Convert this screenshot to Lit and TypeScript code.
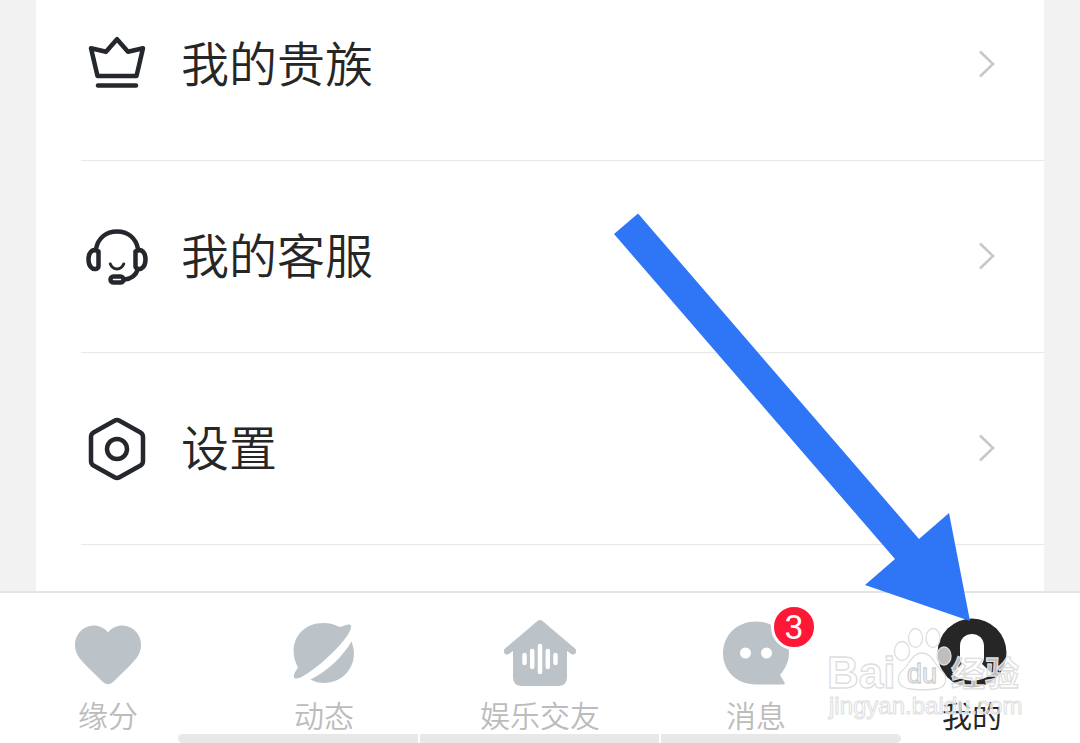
import { LitElement, html, css, svg } from "lit";
import { customElement } from "lit/decorators.js";

const crown = svg`<path d="M91 48.2 97.500 76H136.500L143 48.2 128 51.8 117 39.2 106 51.8Z"/><path d="M98 85.500H136"/>`;
const headset = svg`<path d="M96 249C98 238 106 231.500 117 231.500S136 238 138 249"/><path d="M98.500 251.500C92 247.500 88.500 253 88.500 259.500S92 270 96.500 268.800C97.800 268.300 98.500 267.500 98.500 266Z"/><path d="M135.500 251.500C142 247.500 145.500 253 145.500 259.500S142 270 137.500 268.800C136.200 268.300 135.500 267.500 135.500 266Z"/><path d="M138 269C136 275 131 279 124 279.500"/><rect x="110.500" y="276.500" width="13" height="6" rx="3"/><path stroke-width="3" d="M110.300 264C113 270.500 121 270.500 123.700 264"/>`;
const hexagon = svg`<path d="M114.500 420.700Q117 419.300 119.500 420.700L140.500 432.500Q143 434 143 437V461Q143 464 140.500 465.500L119.500 477.300Q117 478.700 114.500 477.300L93.500 465.500Q91 464 91 461V437Q91 434 93.500 432.500Z"/><circle cx="117" cy="449" r="10"/>`;

const rows = [
  { label: "我的贵族", icon: crown, box: "81 28 72 72" },
  { label: "我的客服", icon: headset, box: "81 220 72 72" },
  { label: "设置", icon: hexagon, box: "81 412 72 72" },
];

const tabs = [
  {
    label: "缘分",
    icon: svg`<path d="M36 15.500C30 7.500 20 7 13.500 10.500C6 14.500 3 21 3 28C3 37 8 42 14 48.500L31.500 65.500Q36 69 40.500 65.500L58 48.500C64 42 69 37 69 28C69 21 66 14.500 58.500 10.500C52 7 42 7.500 36 15.500Z"/>`,
  },
  {
    label: "动态",
    icon: svg`<path d="M10 50.500C-1 31 9 6 36 6Q44 6 51.500 10C57 9 60 6.500 62.500 8C65 10 60 19 51 29C40 41 28 51 17 58Q9 63 6.500 61C4.500 59 7 55 10 50.500Z"/><path d="M63.500 24.500C72 46 57 66 36 66Q29 66 22.500 62.500C40 54 55 39 63.500 24.500Z"/>`,
  },
  {
    label: "娱乐交友",
    icon: svg`<path d="M33.500 4Q36 2 38.500 4L71 31.500C74.500 35 69.500 39.500 66.500 36.500L63 34V60Q63 69 54 69H18Q9 69 9 60V34L5.500 36.500C2.500 39.500-2.500 35 1 31.500Z"/><path stroke="#fff" stroke-width="4.500" stroke-linecap="round" d="M20.500 38V46M28.200 34V50M36 29V55M43.800 34V50M51.500 38V46"/>`,
  },
  {
    label: "消息",
    badge: 3,
    icon: svg`<path d="M36 67.500C16 67.500 3 53 3 36.500C3 18 17 4.500 36 4.500S69 18 69 36C69 45 65 52 60 58L64.500 65.500Q65.500 67.500 63.500 67.500Z"/><circle cx="25.500" cy="36" r="5.500" fill="#fff"/><circle cx="46.500" cy="36" r="5.500" fill="#fff"/>`,
  },
  {
    label: "我的",
    current: true,
    icon: svg`<circle cx="36" cy="36" r="34.500"/><path fill="#fff" d="M24 29C24 13 48 13 48 29V41Q48 44 46 47C49 50 53 53 56 57C44 66 28 66 16 57C19 53 23 50 26 47Q24 44 24 41Z"/>`,
  },
];

@customElement("app-root")
export class AppRoot extends LitElement {
  static styles = css`
    :host {
      display: block;
      font-family: "Noto Sans CJK SC", "Liberation Sans", sans-serif;
      font-weight: 350;
      color: #262626;
    }
    .screen {
      position: relative;
      display: flex;
      flex-direction: column;
      height: 100vh;
      overflow: hidden;
      background: #f2f2f2;
    }
    .content {
      flex: 1;
      min-height: 0;
      overflow: hidden;
      margin: 0 36px;
      background: #fff;
    }
    .list {
      list-style: none;
      margin: -31px 0 0;
      padding: 0 0 0 45px;
    }
    .row {
      box-sizing: border-box;
      height: 192px;
      border-bottom: 1px solid #e8e8e8;
    }
    .link {
      box-sizing: border-box;
      display: flex;
      align-items: center;
      gap: 28px;
      height: 100%;
      padding: 0 48px 2px 0;
      color: inherit;
      text-decoration: none;
      font-size: 48px;
      line-height: 72px;
    }
    .row-icon {
      width: 72px;
      height: 72px;
      fill: none;
      stroke: #24272c;
      stroke-width: 4.5;
      stroke-linecap: round;
      stroke-linejoin: round;
    }
    .name {
      flex: 1;
      padding-bottom: 6px;
    }
    .chevron {
      width: 18px;
      height: 28px;
      fill: none;
      stroke: #c8c8c8;
      stroke-width: 2.6;
    }
    .tabs {
      display: grid;
      grid-template-columns: repeat(5, 1fr);
      height: 150px;
      border-top: 2px solid #e4e4e4;
      background: #fff;
    }
    .tab {
      display: flex;
      flex-direction: column;
      align-items: center;
      gap: 4px;
      padding: 24px 0 0;
      border: 0;
      background: none;
      color: #bcbcbc;
      font: inherit;
      font-size: 30px;
      line-height: 42px;
    }
    .tab.current {
      color: #262626;
      font-weight: 400;
    }
    .figure {
      position: relative;
      display: block;
      height: 72px;
    }
    .tab-icon {
      width: 72px;
      height: 72px;
      fill: #bbc3c9;
    }
    .current .tab-icon {
      fill: #262626;
    }
    .badge {
      position: absolute;
      top: -13px;
      right: -25px;
      width: 40px;
      height: 40px;
      border: 3px solid #fff;
      border-radius: 50%;
      background: #ff1836;
      color: #fff;
      font: 34px/40px Roboto, sans-serif;
    }
    .gesture {
      position: absolute;
      left: 178px;
      right: 179px;
      bottom: 0;
      display: grid;
      grid-template-columns: repeat(3, 1fr);
      gap: 2px;
      height: 9px;
      border-radius: 5px;
      overflow: hidden;
    }
    .segment {
      background: #e8e8e8;
    }
    .overlay {
      position: absolute;
      right: 0;
      bottom: 0;
      width: 480px;
      height: 543px;
      pointer-events: none;
    }
    .arrow {
      fill: #2f76f6;
    }
    .mark {
      fill: #fff;
      fill-opacity: 0.7;
      stroke: #dedede;
      stroke-width: 1.3;
    }
    .brand {
      font-family: "Liberation Sans", sans-serif;
      font-size: 44px;
      font-weight: 700;
    }
    .brand-cjk {
      font-family: "Noto Sans CJK SC", sans-serif;
      font-size: 34px;
      font-weight: 700;
    }
    .brand-du {
      font-family: "Liberation Sans", sans-serif;
      font-size: 27px;
      font-weight: 400;
      stroke: #cfcfcf;
    }
    .site {
      font-family: "Liberation Sans", sans-serif;
      font-size: 24px;
      font-weight: 400;
      stroke-width: 1;
    }
  `;

  render() {
    return html`
      <div class="screen">
        <main class="content">
          <ul class="list">
            ${rows.map(
              (r) => html`<li class="row">
                <a class="link" href="#">
                  <svg class="row-icon" viewBox=${r.box} aria-hidden="true">${r.icon}</svg>
                  <span class="name">${r.label}</span>
                  <svg class="chevron" viewBox="0 0 18 28" aria-hidden="true"><path d="M2 1.500 15 14 2 26.500" /></svg>
                </a>
              </li>`
            )}
          </ul>
        </main>
        <nav class="tabs">
          ${tabs.map(
            (t) => html`<button class="tab ${t.current ? "current" : ""}" type="button">
              <span class="figure">
                <svg class="tab-icon" viewBox="0 0 72 72" aria-hidden="true">${t.icon}</svg>
                ${t.badge ? html`<span class="badge">${t.badge}</span>` : ""}
              </span>
              <span>${t.label}</span>
            </button>`
          )}
        </nav>
        <div class="gesture"><i class="segment"></i><i class="segment"></i><i class="segment"></i></div>
        <svg class="overlay" viewBox="600 200 480 543" aria-hidden="true">
          <path class="arrow" d="M638 213.500 919 539 949 513 970 621 865 585 895 559 614 234Z" />
          <g class="mark">
            <text class="brand" x="827" y="688">Bai</text>
            <ellipse cx="902" cy="651" rx="7.500" ry="9.500" />
            <ellipse cx="915.500" cy="638" rx="7" ry="9.500" />
            <ellipse cx="933" cy="638" rx="7" ry="9.500" />
            <ellipse cx="944" cy="656" rx="7" ry="9" />
            <path d="M922 653C932 653 934 664 941 670C948 676 948 688 935 689C930 690 915 690 911 689C896 688 896 676 903 670C910 664 912 653 922 653Z" />
            <text class="brand-du" x="907" y="683">du</text>
            <text class="brand-cjk" x="951" y="686">经验</text>
            <text class="site" x="829" y="714">jingyan.baidu.com</text>
          </g>
        </svg>
      </div>
    `;
  }
}
